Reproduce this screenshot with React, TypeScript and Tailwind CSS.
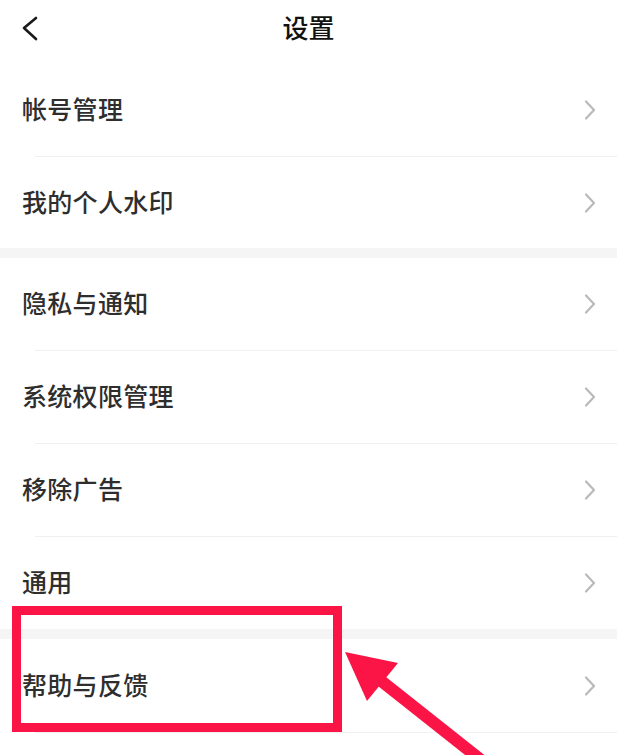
import React from "react";

const font = { fontFamily: '"Noto Sans CJK SC", "Noto Sans", sans-serif' };

function Chevron() {
  return (
    <svg width="12" height="22" viewBox="0 0 12 22" className="shrink-0">
      <path d="M2 2.5 L10 11 L2 19.5" fill="none" stroke="#b9b9b9" strokeWidth="2.2" strokeLinecap="round" strokeLinejoin="round" />
    </svg>
  );
}

function Row({ label, h = "h-[92px]" }: { label: string; h?: string }) {
  return (
    <div className={`${h} flex items-center justify-between pl-[22px] pr-[21px]`}>
      <span className="text-[25px] leading-none font-medium text-[#2e2e2e] tracking-[0.3px] -mt-[3px]">{label}</span>
      <Chevron />
    </div>
  );
}

function Divider() {
  return <div className="ml-[35px] h-px bg-[#f0f0f0]" />;
}

function Gap() {
  return <div className="h-[10px] bg-[#f5f5f5]" />;
}

export default function App() {
  return (
    <div className="relative w-[617px] h-[755px] overflow-hidden bg-white" style={font}>
      <div className="h-[64px] pb-2">
        <div className="relative h-[56px] flex items-center justify-center">
          <svg width="20" height="28" viewBox="0 0 20 28" className="absolute left-[20px] top-[14px]">
            <path d="M16 4 L4 14 L16 25" fill="none" stroke="#1a1a1a" strokeWidth="2.6" strokeLinecap="round" strokeLinejoin="round" />
          </svg>
          <span className="text-[26px] leading-none font-medium text-[#111] -mt-[2px]">设置</span>
        </div>
      </div>

      <Row label="帐号管理" />
      <Divider />
      <Row label="我的个人水印" h="h-[91px]" />
      <Gap />
      <Row label="隐私与通知" />
      <Divider />
      <Row label="系统权限管理" />
      <Divider />
      <Row label="移除广告" />
      <Divider />
      <Row label="通用" />
      <Gap />
      <Row label="帮助与反馈" h="h-[93px]" />
      <Divider />

      <div className="absolute left-[12px] top-[606px] w-[330px] h-[126px] border-[9px] border-[#fb1446]" />
      <svg className="absolute left-0 top-0 pointer-events-none" width="617" height="755" viewBox="0 0 617 755">
        <polygon points="345,652 398,663 367,701" fill="#fb1446" />
        <line x1="375" y1="676" x2="500" y2="775" stroke="#fb1446" strokeWidth="12" />
      </svg>
    </div>
  );
}
